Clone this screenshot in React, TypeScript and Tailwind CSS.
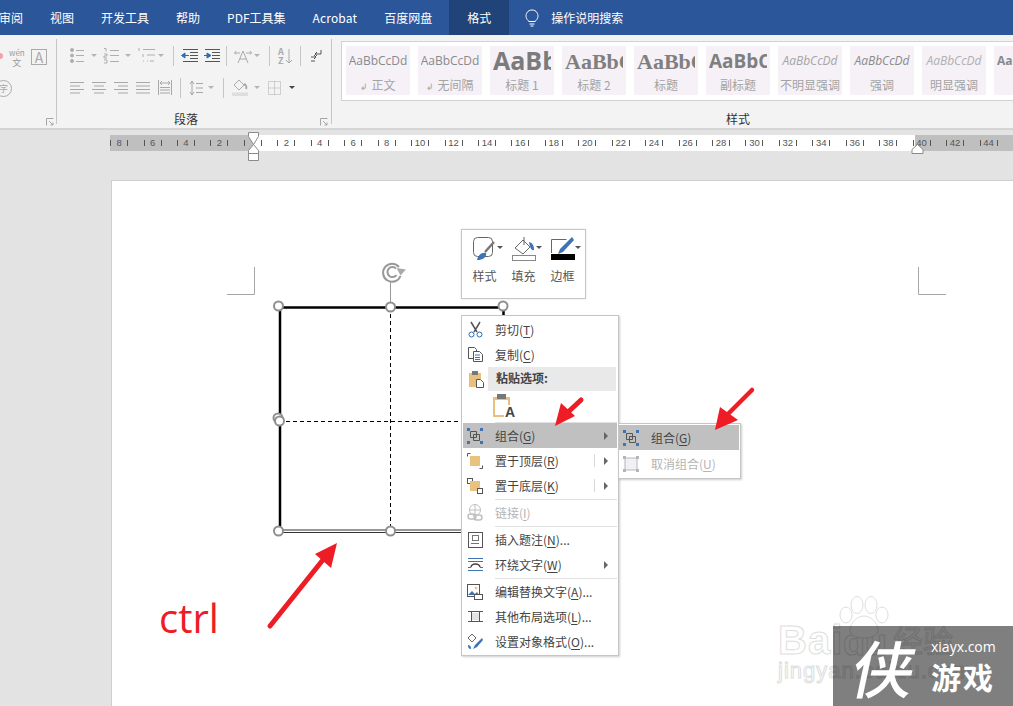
import type { ReactNode } from 'react';

const tabs = ['审阅', '视图', '开发工具', '帮助', 'PDF工具集', 'Acrobat', '百度网盘'];

const sans = "[font-family:'Open_Sans',sans-serif]";
const serif = "[font-family:'Liberation_Serif',serif]";

const styleItems = [
  { preview: 'AaBbCcDd', label: '正文', mark: true, cls: `${sans} text-[12px] text-[#8a8a8a]` },
  { preview: 'AaBbCcDd', label: '无间隔', mark: true, cls: `${sans} text-[12px] text-[#8a8a8a]` },
  { preview: 'AaBb', label: '标题 1', clip: true, cls: `${sans} text-[25px] font-bold text-[#7b7b7b]` },
  { preview: 'AaBbC', label: '标题 2', clip: true, cls: `${serif} text-[22px] font-bold text-[#7f7f7f]` },
  { preview: 'AaBbC', label: '标题', clip: true, cls: `${serif} text-[22px] font-bold text-[#7f7f7f]` },
  { preview: 'AaBbCc', label: '副标题', clip: true, cls: `${sans} text-[19px] font-bold text-[#7f7f7f]` },
  { preview: 'AaBbCcDd', label: '不明显强调', cls: `${sans} text-[12px] italic text-[#a5a5a5]` },
  { preview: 'AaBbCcDd', label: '强调', cls: `${sans} text-[12px] italic text-[#8a8a8a]` },
  { preview: 'AaBbCcDd', label: '明显强调', cls: `${sans} text-[12px] italic text-[#b0b0b0]` },
  { preview: 'AaB', label: '', clip: true, cls: `${sans} text-[12px] font-bold text-[#8a8a8a]` },
];

const rulerLabels = [8, 6, 4, 2, 0, 2, 4, 6, 8, 10, 12, 14, 16, 18, 20, 22, 24, 26, 28, 30, 32, 34, 36, 38, 40, 42, 44, 46];

function Caret({ ml = 'ml-[4px]', dark }: { ml?: string; dark?: boolean }) {
  return <span className={`${ml} w-0 h-0 border-x-[3px] border-x-transparent border-t-[3px] ${dark ? 'border-t-[#444]' : 'border-t-[#b4b4b4]'}`} />;
}

function Divider({ x }: { x: string }) {
  return <span className={`w-px h-[20px] bg-[#c6c6c6] ${x}`} />;
}

function Lines({ rows }: { rows: [number, number][] }) {
  return (
    <svg width="14" height="15" viewBox="0 0 14 15" className="stroke-[#a8a8a8]" strokeWidth="1" fill="none">
      {rows.map(([a, b], i) => (
        <line key={i} x1={a} x2={b} y1={2.5 + i * 3.5} y2={2.5 + i * 3.5} />
      ))}
    </svg>
  );
}

function ListIcon({ kind }: { kind: 'dot' | 'num' | 'multi' }) {
  return (
    <svg width="17" height="17" viewBox="0 0 17 17" fill="none" className="stroke-[#aeaeae]" strokeWidth="1">
      {kind === 'dot' && (
        <>
          <circle cx="2" cy="3" r="1.5" fill="#aeaeae" />
          <circle cx="2" cy="8.5" r="1.5" fill="#aeaeae" />
          <circle cx="2" cy="14" r="1.5" fill="#aeaeae" />
          <path d="M6 3.5h8M6 8.5h8M6 14.5h8" />
        </>
      )}
      {kind === 'num' && <path d="M1 1.5h2v3M1 7h3v2H1v2h3M1 13h3v3H1M7 3.5h9M7 8.5h9M7 14.5h9" />}
      {kind === 'multi' && <path d="M1 1v3M5 2.5h12M5 7v3M9 8h8M9 14h1M12 14h4M5 14h1" />}
    </svg>
  );
}

function IndentIcon({ flip }: { flip?: boolean }) {
  return (
    <svg width="17" height="14" viewBox="0 0 17 14" fill="none">
      <path d="M2 .5h15M9 3.5h8M9 6.5h8M9 9.5h8M2 12.5h15" stroke="#555" strokeWidth="1" />
      {flip ? <path d="M1 6.5h3V4l4 2.5L4 9V6.5" fill="#2b6cb0" stroke="#2b6cb0" /> : <path d="M8 6.5H4V4L.5 6.5 4 9V6.5" fill="#2b6cb0" stroke="#2b6cb0" />}
    </svg>
  );
}

function Launcher() {
  return (
    <svg width="8" height="8" viewBox="0 0 8 8" fill="none" stroke="#a6a6a6">
      <path d="M.5 7.5v-7h7M3 3l4 4M7 4.5V7H4.5" />
    </svg>
  );
}

function Paragraph() {
  return (
    <div className="w-[274px] shrink-0 relative flex flex-col items-start pl-[13px] pt-[12px]">
      <div className="flex items-center h-[17px]">
        <ListIcon kind="dot" />
        <Caret />
        <span className="w-[6px]" />
        <ListIcon kind="num" />
        <Caret ml="ml-[5px]" />
        <span className="w-[7px]" />
        <ListIcon kind="multi" />
        <Caret ml="ml-[3px]" />
        <Divider x="ml-[9px] mr-[7px]" />
        <IndentIcon />
        <span className="w-[5px]" />
        <IndentIcon flip />
        <Divider x="ml-[6px] mr-[7px]" />
        <svg width="18" height="16" viewBox="0 0 18 16" fill="none" stroke="#aaa">
          <path d="M2 3 .5 5 2 6.5M.5 5H6M16 3l1.5 2-1.5 1.5M17.5 5H12M4 15l5-12 5 12M6 11h6" />
        </svg>
        <Caret ml="ml-[2px]" />
        <Divider x="ml-[9px] mr-[8px]" />
        <div className="flex items-center w-[15px]">
          <div className="flex flex-col text-[9px] leading-[9px] text-[#aaa] font-bold">
            <span>A</span>
            <span>Z</span>
          </div>
          <svg width="8" height="16" viewBox="0 0 8 16" fill="none" stroke="#aaa" className="ml-px">
            <path d="M4 1v14M1 12l3 3 3-3" />
          </svg>
        </div>
        <Divider x="ml-[7px] mr-[10px]" />
        <svg width="11" height="13" viewBox="0 0 11 13" fill="none" stroke="#555">
          <path d="M10 1v4H4M6 3 4 5l2 2M0 8h5M3 6l2 2-2 2M0 12h4" />
        </svg>
      </div>
      <div className="flex items-center h-[17px] mt-[15px]">
        <Lines rows={[[0, 14], [0, 10], [0, 14], [0, 10]]} />
        <span className="w-[8px]" />
        <Lines rows={[[0, 14], [2, 12], [0, 14], [2, 12]]} />
        <span className="w-[8px]" />
        <Lines rows={[[0, 14], [4, 14], [0, 14], [4, 14]]} />
        <span className="w-[8px]" />
        <Lines rows={[[0, 14], [0, 14], [0, 14], [0, 14]]} />
        <span className="w-[8px]" />
        <svg width="14" height="16" viewBox="0 0 14 16" fill="none" stroke="#a8a8a8">
          <path d="M.5 0v15M13.5 0v15M2 3h10M4 1 2 3l2 2M10 1l2 2-2 2M2 7.5h10M2 10h10M2 13h10" />
        </svg>
        <Divider x="ml-[8px] mr-[8px]" />
        <svg width="14" height="16" viewBox="0 0 14 16" fill="none" stroke="#a8a8a8">
          <path d="M3 1v14M1 4l2-3 2 3M1 12l2 3 2-3M7 3.5h7M7 8h7M7 12.5h7" />
        </svg>
        <Caret ml="ml-[5px]" />
        <Divider x="ml-[9px] mr-[8px]" />
        <svg width="16" height="17" viewBox="0 0 16 17" fill="none">
          <path d="M7 1 2 6l5 5 5-5z" stroke="#aaa" />
          <path d="M12 5c2 1 3 3 2 5" stroke="#aaa" strokeWidth="2" />
          <rect y="13.5" width="16" height="3.5" fill="#dedede" />
        </svg>
        <Caret ml="ml-[6px]" />
        <span className="w-[8px]" />
        <svg width="13" height="14" viewBox="0 0 13 14" fill="none" stroke="#aaa" strokeDasharray="1 1">
          <path d="M.5.5h12v13H.5zM.5 7h12M6.5.5v13" />
        </svg>
        <Caret ml="ml-[8px]" dark />
      </div>
      <span className="absolute left-[117px] top-[75px] text-[12px] leading-[18px] text-[#333]">段落</span>
      <span className="absolute right-[3px] top-[83px]">
        <Launcher />
      </span>
    </div>
  );
}

function LeftFragment() {
  return (
    <div className="w-[57px] shrink-0 relative my-[4px]">
      <span className="absolute left-[-3px] top-[14px] w-[6px] h-[6px] rounded-full bg-[#f2a0a8]" />
      <div className="absolute left-[9px] top-[9px] flex flex-col items-center text-[#9a9a9a] leading-[10px]">
        <span className="text-[8px]">wén</span>
        <span className="text-[9px]">文</span>
      </div>
      <span className="absolute left-[31px] top-[10px] w-[16px] h-[16px] border border-[#aaa] text-[#aaa] text-[14px] leading-[14px] text-center">A</span>
      <span className="absolute left-[-5px] top-[41px] w-[17px] h-[17px] rounded-full border border-[#aaa] text-[#aaa] text-[9px] leading-[15px] text-center">字</span>
      <span className="absolute left-[46px] top-[79px]">
        <Launcher />
      </span>
    </div>
  );
}

function Styles() {
  return (
    <div className="flex-1 min-w-0 relative pl-[9px] pt-[2px] border-l border-[#c6c6c6] my-[4px]">
      <div className="h-[60px] border border-r-0 border-[#d2d2d2] bg-white flex gap-[8px] pl-[4px] pt-[4px] overflow-hidden">
        {styleItems.map((s, i) => (
          <div key={i} className="w-[64px] h-[49px] shrink-0 bg-[#f5f1f7] flex flex-col items-center overflow-hidden px-[3px]">
            <div className={`h-[30px] w-full flex items-center overflow-hidden ${s.clip ? 'justify-start' : 'justify-center'}`}>
              <span className={`whitespace-nowrap ${s.cls}`}>{s.preview}</span>
            </div>
            <span className="mt-px text-[12px] leading-[16px] whitespace-nowrap text-[#a3a3a3]">
              {s.mark && <span className="text-[9px] mr-[3px]">↲</span>}
              {s.label}
            </span>
          </div>
        ))}
      </div>
      <span className="absolute left-[394px] top-[71px] text-[12px] leading-[18px] text-[#333]">样式</span>
    </div>
  );
}

function Ruler() {
  return (
    <div className="relative ml-[110px] mt-[5px] h-[16px] flex overflow-hidden bg-white shrink-0">
      <div className="absolute inset-y-0 left-0 w-[143px] bg-[#bfbfbf]" />
      <div className="absolute inset-y-0 left-[805px] right-0 bg-[#bfbfbf]" />
      <div className="relative flex -ml-[7.6px] shrink-0">
        {rulerLabels.map((n, i) => (
          <div key={i} className="w-[33.45px] shrink-0 flex items-center justify-center">
            <span className="w-px h-[6px] bg-[#555]" />
            <span className="w-[16px] text-center text-[9.5px] leading-[16px] text-[#555] [font-family:'Liberation_Sans',sans-serif]">{n === 0 ? '' : n}</span>
            <span className="w-px h-[6px] bg-[#555]" />
          </div>
        ))}
      </div>
    </div>
  );
}

function Hotkey({ text, k, after = ')', muted }: { text: string; k: string; after?: string; muted?: boolean }) {
  return (
    <span className={`block text-[12px] leading-[16px] whitespace-nowrap ${muted ? 'text-[#b5b5b5]' : 'text-[#444]'}`}>
      {text}(<span className="underline underline-offset-2">{k}</span>
      {after}
    </span>
  );
}

function GroupIcon({ muted }: { muted?: boolean }) {
  const c = muted ? '#b5b5b5' : '#3f73b5';
  const l = muted ? '#b5b5b5' : '#555';
  return (
    <svg width="16" height="16" viewBox="0 0 16 16" fill="none">
      <path d={muted ? 'M2 2h12v12H2z' : 'M3.5 3.5h6v6h-6zM6.5 6.5h6v6h-6z'} stroke={l} fill={muted ? '#f3eff6' : 'none'} />
      <rect x="0" y="0" width="3" height="3" fill={c} />
      <rect x="13" y="0" width="3" height="3" fill={c} />
      <rect x="0" y="13" width="3" height="3" fill={c} />
      <rect x="13" y="13" width="3" height="3" fill={c} />
    </svg>
  );
}

function MenuRow({ icon, children, arrow, split, hover }: { icon: ReactNode; children: ReactNode; arrow?: boolean; split?: boolean; hover?: boolean }) {
  return (
    <div className={`h-[25px] flex items-center mx-px ${hover ? 'bg-[#c0c0c0]' : ''}`}>
      <span className="w-[24px] mr-[8px] flex justify-center shrink-0">{icon}</span>
      <span className="flex-1">{children}</span>
      {split && <span className="w-px h-[13px] bg-[#d8d8d8] mr-[9px]" />}
      {arrow && <span className="mr-[9px] w-0 h-0 border-y-[4px] border-y-transparent border-l-[4px] border-l-[#666]" />}
    </div>
  );
}

function Sep() {
  return (
    <div className="h-[2px] flex items-center pl-[32px] mx-px">
      <span className="h-px w-full bg-[#e1e1e1]" />
    </div>
  );
}

function ContextMenu() {
  return (
    <div className="absolute left-[461px] top-[315px] w-[158px] h-[341px] bg-white border border-[#c6c6c6] shadow-[1px_1px_2px_rgba(0,0,0,0.2)] pt-px">
      <MenuRow
        icon={
          <svg width="15" height="17" viewBox="0 0 15 17" fill="none" stroke="#555">
            <path d="M3 1l6 10M12 1 6 11" strokeWidth="1.5" />
            <circle cx="3.5" cy="13.5" r="2.5" stroke="#2b6cb0" />
            <circle cx="11.5" cy="13.5" r="2.5" stroke="#2b6cb0" />
          </svg>
        }
      >
        <Hotkey text="剪切" k="T" />
      </MenuRow>
      <MenuRow
        icon={
          <svg width="15" height="15" viewBox="0 0 15 15" fill="none" stroke="#555">
            <path d="M.5.5h6l2 2v9h-8z" fill="#fff" />
            <path d="M5.5 4.5h6l3 3v7h-9z" fill="#fff" />
            <path d="M7 8h5M7 10.5h5M7 12.5h5" stroke="#3f73b5" />
          </svg>
        }
      >
        <Hotkey text="复制" k="C" />
      </MenuRow>
      <div className="h-[24px] flex items-center mx-px">
        <span className="w-[25px] flex justify-center pl-[2px]">
          <svg width="15" height="17" viewBox="0 0 15 17">
            <rect y="2" width="12" height="14" fill="#e8bf7d" />
            <rect x="3" y="0" width="6" height="4" fill="#777" />
            <path d="M7.5 8.5h4l3 3v5h-7z" fill="#fff" stroke="#555" />
          </svg>
        </span>
        <span className="flex-1 h-full bg-[#e9e9e9] flex items-center pl-[8px] pb-[2px] text-[12px] font-bold text-[#444] mr-px">粘贴选项:</span>
      </div>
      <div className="h-[30px] pl-[31px] flex items-center">
        <span className="relative w-[20px] h-[24px] block">
          <span className="absolute left-0 bottom-[1px] w-[17px] h-[20px] border-2 border-[#e8bf7d] border-t-[3px]" />
          <span className="absolute left-[4px] top-0 w-[9px] h-[5px] bg-[#777]" />
          <span className="absolute right-[-3px] bottom-[-1px] bg-white text-[14px] leading-[14px] font-bold text-[#444] [font-family:'Liberation_Sans',sans-serif] px-px">A</span>
        </span>
      </div>
      <Sep />
      <MenuRow hover arrow icon={<GroupIcon />}>
        <Hotkey text="组合" k="G" />
      </MenuRow>
      <MenuRow
        split
        arrow
        icon={
          <svg width="16" height="16" viewBox="0 0 16 16" fill="none" stroke="#555">
            <path d="M.5 3.5v-3h3M15.5 12.5v3h-3" />
            <rect x="3" y="3" width="10" height="10" fill="#e8c27e" stroke="none" />
          </svg>
        }
      >
        <Hotkey text="置于顶层" k="R" />
      </MenuRow>
      <MenuRow
        split
        arrow
        icon={
          <svg width="16" height="16" viewBox="0 0 16 16" fill="none" stroke="#555">
            <rect x=".5" y=".5" width="5" height="5" fill="#fff" />
            <rect x="3" y="3" width="10" height="10" fill="#e8c27e" stroke="none" />
            <rect x="10.5" y="10.5" width="5" height="5" fill="#fff" />
          </svg>
        }
      >
        <Hotkey text="置于底层" k="K" />
      </MenuRow>
      <Sep />
      <MenuRow
        icon={
          <svg width="16" height="17" viewBox="0 0 16 17" fill="none" stroke="#c0c0c0" strokeWidth="1.5">
            <circle cx="8" cy="6" r="5.5" strokeWidth="1" />
            <path d="M2.5 6h11M8 .5v11" strokeWidth="1" />
            <rect x="1" y="10" width="8" height="5" rx="2.5" />
            <rect x="7" y="11" width="8" height="5" rx="2.5" />
          </svg>
        }
      >
        <Hotkey muted text="链接" k="I" />
      </MenuRow>
      <Sep />
      <MenuRow
        icon={
          <svg width="15" height="16" viewBox="0 0 15 16" fill="none">
            <rect x=".5" y=".5" width="14" height="15" stroke="#555" />
            <rect x="4.5" y="3.5" width="6" height="5" stroke="#777" />
            <path d="M3 11.5h8" stroke="#d44" />
          </svg>
        }
      >
        <Hotkey text="插入题注" k="N" after=")..." />
      </MenuRow>
      <MenuRow
        arrow
        icon={
          <svg width="15" height="15" viewBox="0 0 15 15" fill="none" stroke="#3f73b5">
            <path d="M0 1.5h15M0 4.5h15M0 13.5h15M0 10.5h3M12 10.5h3" />
            <path d="M3 10c1-4 8-4 9 0" stroke="#444" strokeWidth="1.5" />
          </svg>
        }
      >
        <Hotkey text="环绕文字" k="W" />
      </MenuRow>
      <Sep />
      <MenuRow
        icon={
          <svg width="16" height="16" viewBox="0 0 16 16" fill="none">
            <rect x=".5" y=".5" width="12" height="12" stroke="#555" fill="#fff" />
            <path d="M1 11l4-4 3 3 2-2 2 3z" fill="#3f73b5" />
            <circle cx="9" cy="4" r="1.3" fill="#e8bf7d" />
            <rect x="7.5" y="10.5" width="8" height="5" stroke="#555" fill="#fff" />
          </svg>
        }
      >
        <Hotkey text="编辑替换文字" k="A" after=")..." />
      </MenuRow>
      <MenuRow
        icon={
          <svg width="15" height="13" viewBox="0 0 15 13" fill="none" stroke="#555">
            <path d="M0 1.5h15M0 11.5h15M3.5 1.5v10M11.5 1.5v10" />
            <rect x="4" y="3" width="7" height="7" fill="#e3e3e3" stroke="none" />
          </svg>
        }
      >
        <Hotkey text="其他布局选项" k="L" after=")..." />
      </MenuRow>
      <MenuRow
        icon={
          <svg width="16" height="17" viewBox="0 0 16 17" fill="none">
            <path d="M5 1 1 5l4 4 4-4z" stroke="#666" />
            <path d="M15 5 8 12l-2 4 4-2 6-7z" fill="#3f73b5" />
            <path d="M1 12c2 0 3 1 3 4-2 0-3-1-3-4z" fill="#3f73b5" />
          </svg>
        }
      >
        <Hotkey text="设置对象格式" k="O" after=")..." />
      </MenuRow>
    </div>
  );
}

function SubMenu() {
  return (
    <div className="absolute left-[618px] top-[423px] w-[123px] h-[56px] bg-white border border-[#c6c6c6] shadow-[1px_1px_2px_rgba(0,0,0,0.2)] pt-px">
      <div className="h-[25px] mr-px bg-[#c0c0c0] flex items-center pl-[4px]">
        <GroupIcon />
        <span className="ml-[12px]">
          <Hotkey text="组合" k="G" />
        </span>
      </div>
      <div className="h-[28px] flex items-center pl-[4px]">
        <GroupIcon muted />
        <span className="ml-[12px]">
          <Hotkey muted text="取消组合" k="U" />
        </span>
      </div>
    </div>
  );
}

function MiniToolbar() {
  const tools = [
    {
      label: '样式',
      icon: (
        <svg width="24" height="24" viewBox="0 0 24 24" fill="none">
          <rect x=".5" y=".5" width="19" height="19" rx="4" stroke="#666" />
          <path d="M21 5 12 15" stroke="#777" strokeWidth="2.5" />
          <path d="M4 23c1-5 5-8 9-7 1 3-2 7-9 7z" fill="#3f73b5" />
        </svg>
      ),
    },
    {
      label: '填充',
      icon: (
        <svg width="24" height="24" viewBox="0 0 24 24" fill="none">
          <path d="M11 3 3 11l8 6 7-7z" stroke="#666" fill="#fff" />
          <path d="M12 0v8" stroke="#666" />
          <path d="M17 5c4 1 5 4 5 8-3 1-4-3-5-8z" fill="#3f73b5" />
          <rect x=".5" y="18.5" width="23" height="5" stroke="#888" />
        </svg>
      ),
    },
    {
      label: '边框',
      icon: (
        <svg width="24" height="24" viewBox="0 0 24 24" fill="none">
          <path d="M.5 16V2.5h15" stroke="#666" />
          <path d="M21 0 9 12l-2 5 5-2L23 3z" fill="#3f73b5" />
          <rect y="17" width="24" height="6" fill="#000" />
        </svg>
      ),
    },
  ];
  return (
    <div className="absolute left-[461px] top-[229px] w-[125px] h-[70px] bg-white border border-[#c6c6c6] shadow-[0_0_2px_rgba(0,0,0,0.12)] flex pt-[7px] pl-[3px]">
      {tools.map((t) => (
        <div key={t.label} className="w-[39px] shrink-0 flex flex-col items-center">
          <div className="relative h-[24px] w-[24px]">
            {t.icon}
            <span className="absolute left-[24px] top-[9px] w-0 h-0 border-x-[3px] border-x-transparent border-t-[3px] border-t-[#555]" />
          </div>
          <span className="mt-[7px] text-[12px] leading-[16px] text-[#555]">{t.label}</span>
        </div>
      ))}
    </div>
  );
}

function Handle({ x, y }: { x: number; y: number }) {
  return <circle cx={x} cy={y} r="4.5" fill="#fff" stroke="#8f8f8f" strokeWidth="2" />;
}

function Shape() {
  return (
    <svg className="absolute left-0 top-0" width="1013" height="706" viewBox="0 0 1013 706" fill="none">
      <path d="M227 294.5h27.5V267M918.5 267v27.5H946" stroke="#a6a6a6" />
      <path d="M279 307.5H503.5V316" stroke="#000" strokeWidth="2.5" />
      <path d="M280 307v224" stroke="#000" strokeWidth="2.5" />
      <path d="M279 530h225M279 532.5h225" stroke="#333" />
      <path d="M390.5 307v224M279 421.5h225" stroke="#000" strokeDasharray="4 3" />
      <path d="M390.5 282v25" stroke="#999" />
      {/* rotate handle */}
      <path d="M399 267A9 9 0 1 0 400.5 276" stroke="#999" strokeWidth="2" />
      <path d="M396 268.500A5 5 0 1 0 396.500 275" stroke="#999" strokeWidth="2" />
      <path d="M396.500 268l9.500 1.500-5.500 6z" fill="#aaa" />
      <Handle x={278.5} y={306} />
      <Handle x={390.5} y={307} />
      <Handle x={503} y={306} />
      <Handle x={278} y={418} />
      <Handle x={279.5} y={421} />
      <Handle x={278.5} y={531} />
      <Handle x={390.5} y={531} />
    </svg>
  );
}

function RedArrows() {
  return (
    <svg className="absolute left-0 top-0" width="1013" height="706" viewBox="0 0 1013 706" fill="none">
      <path d="M270 626 326 556" stroke="#ee1c25" strokeWidth="5" strokeLinecap="round" />
      <path d="M337 543 315 554 331 568z" fill="#ee1c25" />
      <path d="M581 400 566 414" stroke="#ee1c25" strokeWidth="5" strokeLinecap="round" />
      <path d="M555 426 561 403 575 416z" fill="#ee1c25" />
      <path d="M752 390 728 414" stroke="#ee1c25" strokeWidth="4.5" strokeLinecap="round" />
      <path d="M715 430 720 407 738 420z" fill="#ee1c25" />
    </svg>
  );
}

function Watermarks() {
  const outline = '[-webkit-text-stroke:1px_#dedede] text-white';
  return (
    <>
      <div className={`absolute left-[778px] top-[620px] ${outline} [font-family:'Liberation_Sans',sans-serif] font-bold text-[40px] leading-[40px] tracking-[1px]`}>Bai</div>
      <div className={`absolute left-[843px] top-[625px] ${outline} [font-family:'Liberation_Sans',sans-serif] font-bold text-[36px] leading-[36px]`}>du</div>
      <div className={`absolute left-[893px] top-[622px] ${outline} text-[30px] leading-[34px]`}>经验</div>
      <div className={`absolute left-[778px] top-[658px] ${outline} [font-family:'Liberation_Sans',sans-serif] text-[22px] leading-[26px] tracking-[1px]`}>jingyan.baidu.com</div>
      <svg className="absolute left-[838px] top-[596px]" width="52" height="44" viewBox="0 0 52 44" fill="#fff" stroke="#dedede">
        <ellipse cx="8" cy="19" rx="6" ry="8" />
        <ellipse cx="19" cy="9" rx="6" ry="8.5" />
        <ellipse cx="33" cy="9" rx="6" ry="8.5" />
        <ellipse cx="44" cy="19" rx="6" ry="8" />
        <path d="M26 20c-7 0-14 7-14 14 0 5 5 8 14 8s14-3 14-8c0-7-7-14-14-14z" />
      </svg>
      <div className="absolute left-[833px] top-[626px] right-0 bottom-0 bg-black/50 flex items-center text-white">
        <span className="w-[98px] pl-[21px] text-[62px] leading-[70px] font-medium -skew-x-12">侠</span>
        <div className="flex flex-col">
          <span className={`${sans} text-[14px] leading-[20px]`}>xiayx.com</span>
          <span className="text-[30px] leading-[38px] font-bold tracking-[2px]">游戏</span>
        </div>
      </div>
    </>
  );
}

export default function App() {
  return (
    <div className="relative w-[1013px] h-[706px] overflow-hidden flex flex-col bg-[#e3e3e3] [font-family:'Noto_Sans_CJK_SC','Noto_Sans',sans-serif]">
      {/* Tabs */}
      <div className="h-[35px] shrink-0 bg-[#2b579a] flex items-center text-white text-[12px] -ml-[1px] whitespace-nowrap">
        <div className="flex gap-[27px] items-center">
          {tabs.map((t) => (
            <span key={t} className={t === 'Acrobat' ? 'tracking-[0.15px]' : ''}>
              {t}
            </span>
          ))}
        </div>
        <div className="ml-[17px] w-[60px] h-full bg-[#204479] flex items-center justify-center">格式</div>
        <svg className="ml-[16px]" width="14" height="18" viewBox="0 0 14 18" fill="none" stroke="#fff">
          <path d="M4 12.5C1 10 .5 7 1.5 4.5 3 1.5 5 1 7 1s4 .5 5.5 3.500C13.500 7 13 10 10 12.500zM4.500 15h5M5.500 17h3" />
        </svg>
        <span className="ml-[12px]">操作说明搜索</span>
      </div>

      {/* Ribbon */}
      <div className="h-[95px] shrink-0 bg-[#f3f3f3] border-b-2 border-[#d4d4d4] flex">
        <LeftFragment />
        <div className="w-px my-[4px] bg-[#c6c6c6] -ml-px shrink-0" />
        <Paragraph />
        <Styles />
      </div>

      <Ruler />

      {/* Page */}
      <div className="ml-[111px] mt-[29px] flex-1 bg-white border-l border-t border-[#cfcfcf]" />

      <Shape />

      {/* Indent markers */}
      <svg className="absolute left-[247px] top-[132px]" width="14" height="29" viewBox="0 0 14 29" fill="#fff" stroke="#8a8a8a">
        <path d="M1.5.5h10v4l-5 8-5-8zM6.5 12.5l5 6v3h-10v-3zM1.5 21.5h10v7h-10z" />
      </svg>
      <svg className="absolute left-[911px] top-[144px]" width="13" height="10" viewBox="0 0 13 10" fill="#fff" stroke="#8a8a8a">
        <path d="M6.5.5l5.500 5v4H1v-4z" />
      </svg>

      <span className={`absolute left-[159px] top-[590px] text-[40px] leading-[56px] text-[#ee1c25] ${sans}`}>ctrl</span>

      <MiniToolbar />
      <ContextMenu />
      <SubMenu />
      <RedArrows />
      <Watermarks />
    </div>
  );
}
